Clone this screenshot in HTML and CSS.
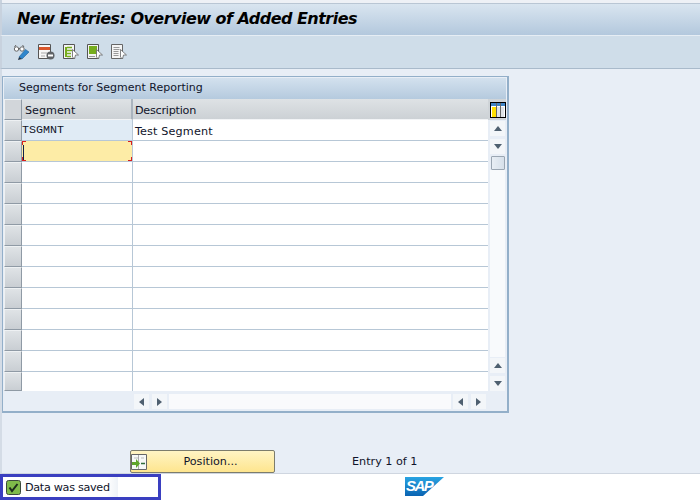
FILE: index.html
```html
<!DOCTYPE html>
<html lang="en">
<head>
<meta charset="utf-8">
<title>New Entries</title>
<link rel="stylesheet" href="styles.css">
</head>
<body>
<div class="app">
  <div class="topstrip"></div>
  <header class="titlebar"><h1>New Entries: Overview of Added Entries</h1></header>
  <nav class="toolbar">
    <svg class="tool" width="17" height="16" viewBox="0 0 17 16"><circle cx="3.500" cy="5" r="2.200" fill="#fff" stroke="#666"/><circle cx="9" cy="5" r="2.200" fill="#fff" stroke="#666"/><path d="M1.500 3 3 1M5.500 4.500h1.500M11 3 9.500 1" stroke="#666" fill="none"/><path d="M6 13 12.500 5.500 16 8 9 15Z" fill="#2f86cc" stroke="#1f5f96" stroke-width=".6"/><path d="M5 16 6 13 9 15Z" fill="#234"/></svg>
    <svg class="tool" width="17" height="16" viewBox="0 0 17 16"><path d="M.5.500h12v14H.5Z" fill="#f6f6f6" stroke="#555"/><rect x="1" y="3" width="11" height="3" fill="#d9562b"/><path d="M3 9h6M3 12h4" stroke="#aaa"/><circle cx="12.500" cy="11.500" r="4" fill="#5e6266"/><rect x="10" y="10.500" width="5" height="2" fill="#fff"/></svg>
    <svg class="tool" width="16" height="16" viewBox="0 0 16 16"><path d="M.5.500h11v14H.5Z" fill="#f4f4f4" stroke="#555"/><path d="M2 3h2v10H2Z" fill="#76ad1d"/><path d="M4 3.500h5M4 6.500h5M4 9.500h4M4 12.500h4" stroke="#76ad1d" stroke-width="1.500"/><path d="M9.500 5.500 15.500 11 12.500 11 11.500 15 9.500 13Z" fill="#fff" stroke="#666" stroke-width=".8"/></svg>
    <svg class="tool" width="16" height="16" viewBox="0 0 16 16"><path d="M.5.500h11v14H.5Z" fill="#f4f4f4" stroke="#555"/><rect x="2" y="2" width="8" height="8" fill="#76ad1d"/><path d="M2 12.500h6" stroke="#999"/><path d="M9.500 5.500 15.500 11 12.500 11 11.500 15 9.500 13Z" fill="#fff" stroke="#666" stroke-width=".8"/></svg>
    <svg class="tool" width="16" height="16" viewBox="0 0 16 16"><path d="M.5.500h11v14H.5Z" fill="#f4f4f4" stroke="#666"/><path d="M2.500 3.500h6M2.500 5.500h6M2.500 7.500h5M2.500 9.500h5M2.500 11.500h5" stroke="#999"/><path d="M9.500 5.500 15.500 11 12.500 11 11.500 15 9.500 13Z" fill="#fff" stroke="#666" stroke-width=".8"/></svg>
  </nav>
  <main class="content">
    <section class="panel">
      <div class="panel-inner">
        <h2 class="panel-title">Segments for Segment Reporting</h2>
        <div class="grid">
          <div class="grid-main">
            <div class="row head">
              <div class="sel sel-head"></div>
              <div class="cell c1">Segment</div>
              <div class="cell c2 desc">Description</div>
            </div>
            <div class="row"><div class="sel"></div><div class="cell c1 mono filled">TSGMNT</div><div class="cell c2 wide">Test Segment</div></div>
            <div class="row"><div class="sel"></div><div class="cell c1 focus"><span class="caret"></span></div><div class="cell c2"></div></div>
            <div class="row"><div class="sel"></div><div class="cell c1"></div><div class="cell c2"></div></div>
            <div class="row"><div class="sel"></div><div class="cell c1"></div><div class="cell c2"></div></div>
            <div class="row"><div class="sel"></div><div class="cell c1"></div><div class="cell c2"></div></div>
            <div class="row"><div class="sel"></div><div class="cell c1"></div><div class="cell c2"></div></div>
            <div class="row"><div class="sel"></div><div class="cell c1"></div><div class="cell c2"></div></div>
            <div class="row"><div class="sel"></div><div class="cell c1"></div><div class="cell c2"></div></div>
            <div class="row"><div class="sel"></div><div class="cell c1"></div><div class="cell c2"></div></div>
            <div class="row"><div class="sel"></div><div class="cell c1"></div><div class="cell c2"></div></div>
            <div class="row"><div class="sel"></div><div class="cell c1"></div><div class="cell c2"></div></div>
            <div class="row"><div class="sel"></div><div class="cell c1"></div><div class="cell c2"></div></div>
            <div class="row last"><div class="sel"></div><div class="cell c1"></div><div class="cell c2"></div></div>
          </div>
          <div class="vscroll">
            <div class="settings">
              <svg width="16" height="16" viewBox="0 0 16 16"><rect width="16" height="16" fill="#000"/><rect x="1" y="1" width="14" height="14" fill="#fff"/><rect x="1" y="1" width="14" height="3" fill="#3f83c4"/><rect x="2" y="5" width="4" height="10" fill="#ffe000"/><rect x="7" y="5" width="3" height="10" fill="#dfe3e6"/><rect x="11" y="5" width="3" height="10" fill="#dfe3e6"/><path d="M6.500 1v14M10.500 1v14" stroke="#666"/></svg>
            </div>
            <div class="sbtn"><span class="arrow up"></span></div>
            <div class="sbtn down"><span class="arrow dn"></span></div>
            <div class="thumb"></div>
            <div class="vtrack"></div>
            <div class="sbtn"><span class="arrow up"></span></div>
            <div class="sbtn down"><span class="arrow dn"></span></div>
          </div>
        </div>
        <div class="hscroll">
          <div class="hbtn"><span class="arrow lf"></span></div>
          <div class="hbtn"><span class="arrow rt"></span></div>
          <div class="htrack"></div>
          <div class="hbtn"><span class="arrow lf"></span></div>
          <div class="hbtn"><span class="arrow rt"></span></div>
        </div>
      </div>
    </section>
    <div class="actions">
      <button class="position" type="button">
        <svg class="pos-icon" width="16" height="16" viewBox="0 0 16 16"><path d="M.5.500h15v15H.5Z" fill="#f6f8f6" stroke="#666"/><path d="M7.500 1v14" stroke="#aaa"/><path d="M3 4h4M10 4h3" stroke="#bbb"/><path d="M1 8h4V5l4 4.500L5 14v-3H1Z" fill="#5fa52a"/><path d="M10 9.500h4" stroke="#2f6d3a" stroke-width="1.500"/></svg>
        <span class="pos-label">Position...</span>
      </button>
      <span class="entry">Entry 1 of 1</span>
    </div>
  </main>
  <footer class="status">
    <div class="message">
      <div class="msg-inner">
        <svg width="15" height="15" viewBox="0 0 15 15"><rect x=".5" y=".5" width="14" height="14" rx="2" fill="#7fbb4a" stroke="#3c4a3c"/><path d="M3.500 7.500 6 11 11.500 4" fill="none" stroke="#1c2c1c" stroke-width="2"/></svg>
        <span class="msg-text">Data was saved</span>
      </div>
    </div>
    <svg class="logo" width="40" height="20" viewBox="0 0 40 20"><defs><linearGradient id="sapblue" x1="0" y1="0" x2="0" y2="1"><stop offset="0" stop-color="#2aa4e2"/><stop offset="1" stop-color="#0a63b2"/></linearGradient></defs><path d="M0 0h39L18 19H0Z" fill="url(#sapblue)"/><text x="1" y="14" class="logo-text">SAP</text></svg>
  </footer>
</div>
</body>
</html>
```

FILE: styles.css
```css
* { box-sizing: border-box; }
html, body { margin: 0; padding: 0; }
body { width: 700px; height: 500px; overflow: hidden; font-family: "DejaVu Sans", sans-serif; font-size: 11.200px; color: #10142a; }
.app { display: flex; flex-direction: column; width: 700px; height: 500px; background: #e8eef6; }
.topstrip { height: 4px; background: #eef1f6; border-bottom: 1px solid #b9c6d4; border-left: 2px solid #c8d2de; }
.titlebar { height: 31px; background: linear-gradient(#d9e5f0, #b3c8dd); border-left: 2px solid #c8d2de; padding: 0 0 2px 15px; display: flex; align-items: center; }
.titlebar h1 { margin: 0; font: italic bold 16px "DejaVu Sans", sans-serif; letter-spacing: -.53px; color: #000; white-space: nowrap; }
.toolbar { height: 34px; background: #cfdde9; border-left: 2px solid #c8d2de; border-top: 1px solid #e6edf4; border-bottom: 1px solid #a9bacb; display: flex; align-items: center; gap: 8px; padding: 0 0 0 11px; }
.tool { display: block; flex: none; }
.content { flex: 1; display: flex; flex-direction: column; min-height: 0; padding: 7px 0 0 2px; border-left: 2px solid #d4dce6; }
.panel { width: 507px; height: 337px; border: 1px solid #93afc9; border-width: 1px 2px 2px 1px; margin-left: -2px; padding: 1px; background: #e8eef6; }
.panel-inner { height: 100%; display: flex; flex-direction: column; }
.panel-title { margin: 0; height: 21px; flex: none; padding-left: 15px; font-size: 11px; font-weight: normal; line-height: 19px; background: linear-gradient(#d3e1ee, #b5cade); color: #10142a; }
.grid { display: flex; height: 292px; flex: none; }
.grid-main { width: 484px; flex: none; }
.row { display: flex; height: 21px; }
.row.last { height: 19px; }
.sel { width: 18px; flex: none; background: linear-gradient(#dfe3e6, #c9ced3); border: 1px solid #eef1f3; border-right-color: #8f9aa5; border-bottom-color: #8f9aa5; }
.sel-head { background: #d2d6da; }
.cell { background: #fff; border-bottom: 1px solid #b7c7d6; border-right: 1px solid #b7c7d6; line-height: 24px; padding-left: 2px; white-space: nowrap; }
.last .cell { border-bottom: 0; }
.c1 { width: 111px; flex: none; }
.c2 { flex: 1; border-right: 0; }
.wide { letter-spacing: .15px; }
.head .cell { background: linear-gradient(#dee2e5, #ccd1d5); border-bottom: 1px solid #f2f4f6; border-right: 2px solid #aab4be; padding-left: 3px; }
.head .c2 { border-right: 0; padding-left: 2px; letter-spacing: -.25px; }
.cell.mono { font-family: "Liberation Mono", monospace; font-size: 11.670px; line-height: 21px; padding-left: 0; }
.filled { background: #e0ebf5; }
.focus { background-color: #fdeca6; padding: 4px 0 0 1px; background-image: linear-gradient(#d81e1e, #d81e1e), linear-gradient(#d81e1e, #d81e1e), linear-gradient(#d81e1e, #d81e1e), linear-gradient(#d81e1e, #d81e1e), linear-gradient(#d81e1e, #d81e1e), linear-gradient(#d81e1e, #d81e1e), linear-gradient(#d81e1e, #d81e1e), linear-gradient(#d81e1e, #d81e1e); background-repeat: no-repeat; background-size: 4px 1px, 1px 4px, 4px 1px, 1px 4px, 4px 1px, 1px 4px, 4px 1px, 1px 4px; background-position: 0 0, 0 0, 100% 0, 100% 0, 0 100%, 0 100%, 100% 100%, 100% 100%; }
.caret { display: block; width: 1px; height: 15px; background: #10204a; }
.vscroll { width: 18px; flex: none; display: flex; flex-direction: column; align-items: flex-start; background: #e8eef6; }
.settings { width: 18px; height: 21px; flex: none; padding-left: 2px; background: #cfd4d8; display: flex; align-items: center; }
.sbtn { width: 15px; height: 15px; flex: none; margin: 1px 0 0 2px; background: #f3f6f9; display: flex; align-items: center; justify-content: center; }
.sbtn.down { margin-top: 3px; }
.thumb { width: 14px; height: 14px; flex: none; margin: 2px 0 0 3px; background: linear-gradient(90deg, #e8eef4, #d6e0ea); border: 1px solid #9aa6b2; border-radius: 1px; }
.vtrack { width: 15px; flex: 1; margin-left: 2px; background: #f8fafc; }
.arrow { display: block; width: 0; height: 0; border: 4px solid transparent; }
.arrow.up { border-bottom: 5px solid #4f6070; border-top: 0; }
.arrow.dn { border-top: 5px solid #4f6070; border-bottom: 0; }
.arrow.lf { border-right: 5px solid #4f6070; border-left: 0; }
.arrow.rt { border-left: 5px solid #4f6070; border-right: 0; }
.hscroll { display: flex; align-items: center; height: 20px; padding: 2px 0 0 130px; gap: 3px; }
.hbtn { width: 15px; height: 15px; flex: none; background: #f3f6f9; display: flex; align-items: center; justify-content: center; }
.htrack { width: 282px; height: 15px; flex: none; background: #f9fafc; margin: 0 -1px; }
.actions { flex: none; display: flex; align-items: center; height: 23px; margin-top: 37px; padding-left: 126px; }
.position { width: 145px; height: 23px; padding: 0; margin: 0; display: flex; align-items: center; border: 1px solid #7c7c6c; border-radius: 2px; background: linear-gradient(#fff4c4, #fee58e); font: inherit; color: inherit; }
.pos-icon { flex: none; }
.pos-label { flex: 1; text-align: center; }
.entry { margin-left: 77px; }
.status { height: 27px; flex: none; background: #fff; border-top: 1px solid #cfd6e0; display: flex; align-items: center; }
.message { width: 161px; height: 26px; border: 3px solid #3a3fc0; flex: none; padding-left: 2px; display: flex; align-items: center; }
.msg-inner { height: 20px; width: 113px; display: flex; align-items: center; gap: 4px; padding-left: 1px; white-space: nowrap; background: linear-gradient(90deg, #fff 90%, #eef2f7); }
.msg-text { letter-spacing: -.3px; }
.logo { flex: none; margin-left: 244px; display: block; }
.logo-text { font: italic bold 15px "Liberation Sans", sans-serif; letter-spacing: -1.500px; fill: #fff; }
```
